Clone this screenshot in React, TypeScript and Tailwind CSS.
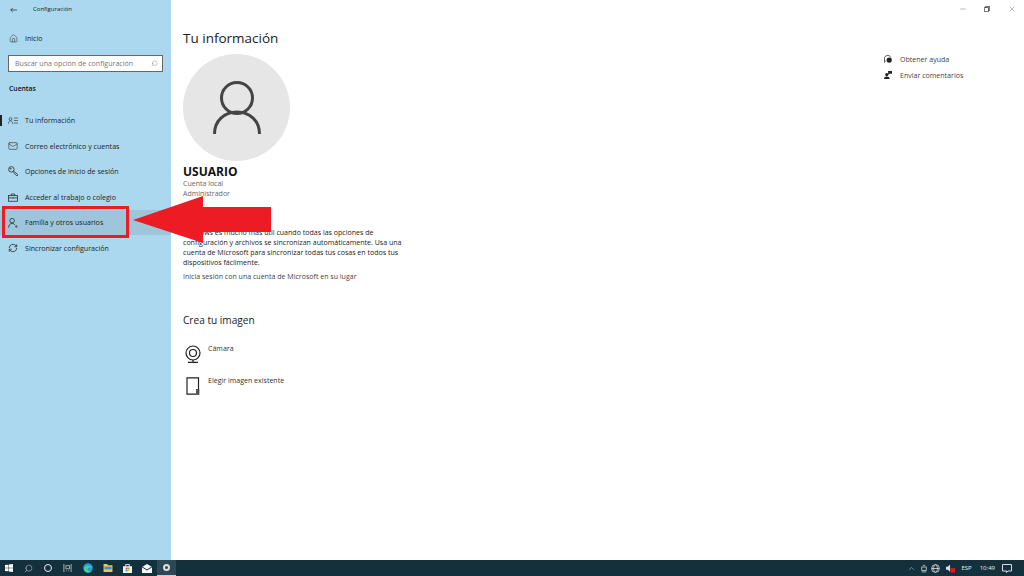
import { ChevronUp, Home, Mail, Search, Minus, X } from "lucide-react";
import type { ReactNode } from "react";

const navItems: { label: string; icon: ReactNode; active?: boolean; current?: boolean }[] = [
  {
    label: "Tu información",
    current: true,
    icon: (
      <svg viewBox="0 0 12 8" className="w-[10px] h-[7px]" fill="none" stroke="#333" strokeWidth="0.8">
        <circle cx="3" cy="2.200" r="1.700" />
        <path d="M0.400 8c0-2 1-3.500 2.600-3.500S5.600 6 5.600 8M7 1h5M7 4h5M7 7h5" />
      </svg>
    ),
  },
  { label: "Correo electrónico y cuentas", icon: <Mail size={10} strokeWidth={1.5} color="#333" /> },
  {
    label: "Opciones de inicio de sesión",
    icon: (
      <svg viewBox="0 0 12 12" className="w-[10px] h-[10px]" fill="none" stroke="#333" strokeWidth="1">
        <circle cx="4" cy="4" r="3.300" />
        <circle cx="3.200" cy="3.200" r="0.700" />
        <path d="M6.500 6 11.500 10v1.500H10L6 7.500" />
      </svg>
    ),
  },
  {
    label: "Acceder al trabajo o colegio",
    icon: (
      <svg viewBox="0 0 12 10" className="w-[10px] h-[9px]" fill="none" stroke="#333" strokeWidth="1">
        <rect x="0.500" y="2.500" width="11" height="7" />
        <path d="M4 2.500V.8h4v1.700M.5 5.500h11M6 4.800v1.500" />
      </svg>
    ),
  },
  {
    label: "Familia y otros usuarios",
    active: true,
    icon: (
      <svg viewBox="0 0 12 12" className="w-[10px] h-[10px]" fill="none" stroke="#333" strokeWidth="1">
        <circle cx="5" cy="3.200" r="2.700" />
        <path d="M.8 11.500c0-3 1.800-5 4.200-5 1.500 0 2.500.7 3.200 1.700" />
        <circle cx="10" cy="10.200" r="0.900" />
      </svg>
    ),
  },
  {
    label: "Sincronizar configuración",
    icon: (
      <svg viewBox="0 0 12 12" className="w-[10px] h-[10px]" fill="none" stroke="#333" strokeWidth="1">
        <path d="M1.500 6a4.500 4.500 0 0 1 8-2.800L10.500 4.500M10.500 6a4.500 4.500 0 0 1-8 2.800L1.500 7.500M10.500 1.500v3h-3M1.500 10.500v-3h3" />
      </svg>
    ),
  },
];

function Sidebar() {
  return (
    <aside className="w-[171px] shrink-0 bg-[#acd8ef] flex flex-col">
      <div className="h-[17px] mt-[1px] flex items-center pl-[10px] text-[6px] text-[#222]">
        <svg viewBox="0 0 10 8" className="w-[7px] h-[6px] mr-[16px]" fill="none" stroke="#222" strokeWidth="1">
          <path d="M10 4H1M4 1 1 4l3 3" />
        </svg>
        <span>Configuración</span>
      </div>
      <div className="h-[11px] mt-[15px] flex items-center pl-[9px] text-[7.100px] text-[#222]">
        <Home size={9} strokeWidth={1.4} color="#333" className="mr-[7px]" />
        <span>Inicio</span>
      </div>
      <div className="mx-[8px] mt-[11px] h-[17px] bg-white border border-[#666] flex items-center justify-between pl-[6px] pr-[4px]">
        <span className="text-[7.080px] text-[#777]">Buscar una opción de configuración</span>
        <Search size={7} strokeWidth={1.2} color="#666" className="-scale-x-100" />
      </div>
      <div className="mt-[12px] pl-[9px] h-[11px] flex items-center text-[6.800px] font-semibold text-[#111]">Cuentas</div>
      <nav className="mt-[12.500px] flex flex-col">
        {navItems.map((item) => (
          <div
            key={item.label}
            className={`h-[25.600px] flex items-center pl-[8px] text-[7.100px] text-[#222] relative ${item.active ? "bg-[#9ec6da]" : ""}`}
          >
            {item.current && <div className="absolute left-0 top-[7px] w-[2px] h-[11px] bg-[#222]" />}
            <span className="w-[17px] flex items-center">{item.icon}</span>
            <span>{item.label}</span>
          </div>
        ))}
      </nav>
    </aside>
  );
}

function Content() {
  return (
    <main className="flex-1 bg-white flex">
      <div className="w-[240px] ml-[12px] flex flex-col">
        <h1 className="mt-[27px] h-[22px] leading-[22px] text-[13.500px] text-[#222]">Tu información</h1>
        <div className="mt-[5px] w-[107px] h-[107px] rounded-full bg-[#e6e6e6] flex items-center justify-center">
          <svg viewBox="0 0 48 54" className="w-[48px] h-[54px]" fill="none" stroke="#444" strokeWidth="3">
            <circle cx="24" cy="17" r="15.500" />
            <path d="M1.500 53C1.500 40 11 31 24 31s22.500 9 22.500 22" />
          </svg>
        </div>
        <div className="mt-[3px] h-[15px] leading-[16px] text-[12px] font-bold text-[#111]">USUARIO</div>
        <div className="text-[7px] leading-[10px] text-[#666]">Cuenta local</div>
        <div className="text-[7px] leading-[10px] text-[#666]">Administrador</div>
        <p className="mt-[28px] text-[7.050px] leading-[10px] text-[#222] whitespace-nowrap">
          Windows es mucho más útil cuando todas las opciones de
          <br />
          configuración y archivos se sincronizan automáticamente. Usa una
          <br />
          cuenta de Microsoft para sincronizar todas tus cosas en todos tus
          <br />
          dispositivos fácilmente.
        </p>
        <div className="mt-[4px] text-[7.050px] leading-[10px] text-[#444] whitespace-nowrap">
          Inicia sesión con una cuenta de Microsoft en su lugar
        </div>
        <h2 className="mt-[31px] h-[16px] leading-[16px] text-[10.100px] text-[#222]">Crea tu imagen</h2>
        <div className="mt-[16px] h-[24px] flex">
          <svg viewBox="0 0 16 18" className="w-[16px] h-[18px] mt-[1px] ml-[2px]" fill="none" stroke="#222" strokeWidth="1.200">
            <circle cx="8" cy="8" r="7" />
            <circle cx="8" cy="8" r="3.500" />
            <path d="M8 15v2M3 17.400h10" />
          </svg>
          <span className="ml-[7px] text-[7.050px] leading-[10px] text-[#333] mt-[-1px]">Cámara</span>
        </div>
        <div className="mt-[8px] h-[24px] flex">
          <svg viewBox="0 0 14 18" className="w-[14px] h-[18px] mt-[1px] ml-[3px]" fill="none" stroke="#222" strokeWidth="1.200">
            <path d="M12.500 12V.8H1v16.400h9" />
            <rect x="10.500" y="12.500" width="2.500" height="5" fill="#555" strokeWidth="0.600" />
          </svg>
          <span className="ml-[8px] text-[7.050px] leading-[10px] text-[#333] mt-[-1px]">Elegir imagen existente</span>
        </div>
      </div>
      <div className="flex-1 flex flex-col items-end">
        <div className="flex items-center h-[17px] text-[#333]">
          <Minus size={8} strokeWidth={1} />
          <svg viewBox="0 0 8 8" className="w-[6px] h-[6px] ml-[17px]" fill="none" stroke="#333" strokeWidth="1">
            <path d="M.5 2h5.500v5.500H.5zM2 2V.5h5.500V6H6" />
          </svg>
          <X size={8} strokeWidth={1} className="ml-[18px] mr-[8px]" />
        </div>
        <div className="mt-[37px] w-[140px] flex flex-col gap-[6px] text-[7.050px] text-[#444]">
          <div className="h-[10px] flex items-center">
            <svg viewBox="0 0 10 10" className="w-[8px] h-[8px] mr-[8px]">
              <path d="M.5 4.500C.5 2 2.500.6 4.500.6S8 1.600 8.500 3M2 7.500.5 9V4.500" fill="none" stroke="#222" />
              <circle cx="6.500" cy="6.300" r="3.300" fill="#222" />
            </svg>
            <span>Obtener ayuda</span>
          </div>
          <div className="h-[10px] flex items-center">
            <svg viewBox="0 0 10 10" className="w-[8px] h-[8px] mr-[8px]" fill="#222">
              <circle cx="3.500" cy="4.500" r="2" />
              <path d="M0 10c0-2 1.500-3 3.500-3S7 8 7 10zM5 0h5v3.500H7L5.500 5z" />
            </svg>
            <span>Enviar comentarios</span>
          </div>
        </div>
      </div>
    </main>
  );
}

function Taskbar() {
  return (
    <footer className="h-[16px] bg-[#15303d] flex items-center text-white shrink-0">
      <svg viewBox="0 0 10 10" className="w-[8px] h-[8px] ml-[5px]" fill="#fff">
        <path d="M0 1.400 4.200.8v3.900H0zM4.800.7 10 0v4.700H4.800zM0 5.300h4.200v3.900L0 8.600zM4.800 5.300H10V10l-5.200-.7z" />
      </svg>
      <Search size={9} strokeWidth={1.300} className="ml-[11px] -scale-x-100" color="#ddd" />
      <div className="ml-[11px] w-[8px] h-[8px] rounded-full border-[1.500px] border-[#eee]" />
      <svg viewBox="0 0 10 10" className="w-[9px] h-[8px] ml-[11px]" fill="none" stroke="#ccc" strokeWidth="1">
        <path d="M.5 0v10M9.500 0v10M3 2h4.500v4H3zM3 8.500h1M6 8.500h1" />
      </svg>
      <svg viewBox="0 0 10 10" className="w-[10px] h-[10px] ml-[11px]">
        <circle cx="5" cy="5" r="4.800" fill="#1b9de2" />
        <path d="M1 6C1 2 8 1 9.600 5.500 8 4 4 4 4.500 6.500 5 8.500 7.500 9 9 7.800 7 10.800 1.500 10 1 6z" fill="#4fd08a" />
      </svg>
      <svg viewBox="0 0 10 9" className="w-[10px] h-[8px] ml-[10px]">
        <path d="M0 0h4l1 1.500h5V9H0z" fill="#f5c542" />
        <path d="M1 3h8v3H1z" fill="#3b8fd6" />
      </svg>
      <svg viewBox="0 0 10 10" className="w-[9px] h-[9px] ml-[10px]">
        <path d="M0 2.500h10V10H0z" fill="#f2f2f2" />
        <path d="M3 3V.5h4V3" fill="none" stroke="#f2f2f2" />
        <path d="M3 4h2v2H3z" fill="#e8502a" />
        <path d="M5.200 4h2v2h-2z" fill="#6bb92c" />
        <path d="M3 6.200h2v2H3z" fill="#1b9de2" />
        <path d="M5.200 6.200h2v2h-2z" fill="#f5c542" />
      </svg>
      <svg viewBox="0 0 10 9" className="w-[10px] h-[9px] ml-[10px]">
        <path d="M0 3 5 0l5 3v6H0z" fill="#f5f5f5" />
        <path d="M0 2.800 5 6l5-3.200" fill="none" stroke="#15303d" />
      </svg>
      <div className="ml-[5px] w-[19px] h-[16px] bg-[#2c4854] border-b border-[#ccc] flex items-center justify-center">
        <div className="w-[7px] h-[7px] rounded-full border-[2px] border-[#ddd]" />
      </div>
      <div className="flex-1" />
      <ChevronUp size={9} strokeWidth={1.300} color="#ddd" />
      <svg viewBox="0 0 8 10" className="w-[6px] h-[9px] ml-[5px]" fill="none" stroke="#ddd" strokeWidth="1">
        <rect x="1" y="3" width="6" height="4.500" />
        <path d="M2.500.8h3M1 9.500h6" />
      </svg>
      <svg viewBox="0 0 10 10" className="w-[9px] h-[9px] ml-[4px]" fill="none" stroke="#ddd" strokeWidth="0.900">
        <circle cx="5" cy="5" r="4.300" />
        <path d="M.7 5h8.600M5 .7c-3 2.500-3 6 0 8.600M5 .7c3 2.500 3 6 0 8.600" />
      </svg>
      <svg viewBox="0 0 10 10" className="w-[9px] h-[9px] ml-[6px]">
        <path d="M0 3h2l2.500-2.500v8L2 6.500H0z" fill="#ddd" />
        <rect x="5" y="4.500" width="5" height="5" fill="#e81123" />
      </svg>
      <span className="ml-[6px] text-[6px] text-[#eee]">ESP</span>
      <span className="ml-[8px] text-[6px] text-[#eee]">10:49</span>
      <svg viewBox="0 0 10 9" className="w-[10px] h-[9px] ml-[7px] mr-[12px]" fill="none" stroke="#eee" strokeWidth="0.900">
        <path d="M.5.5h9v6.500H6L4.500 8.500V7h-4z" />
      </svg>
    </footer>
  );
}

export default function App() {
  return (
    <div className="w-[1024px] h-[576px] overflow-hidden flex flex-col relative" style={{ fontFamily: '"Open Sans", "Noto Sans", sans-serif' }}>
      <div className="flex flex-1 min-h-0">
        <Sidebar />
        <Content />
      </div>
      <Taskbar />
      {/* annotation on top of the screenshot */}
      <div className="absolute left-[2px] top-[206px] w-[127px] h-[32px] border-[3px] border-[#ed1c24]" />
      <svg className="absolute left-[133px] top-[196px]" width="138" height="48" viewBox="0 0 138 48">
        <polygon points="0,24 70,0 70,11 138,11 138,36 70,36 70,47" fill="#ed1c24" />
      </svg>
    </div>
  );
}
